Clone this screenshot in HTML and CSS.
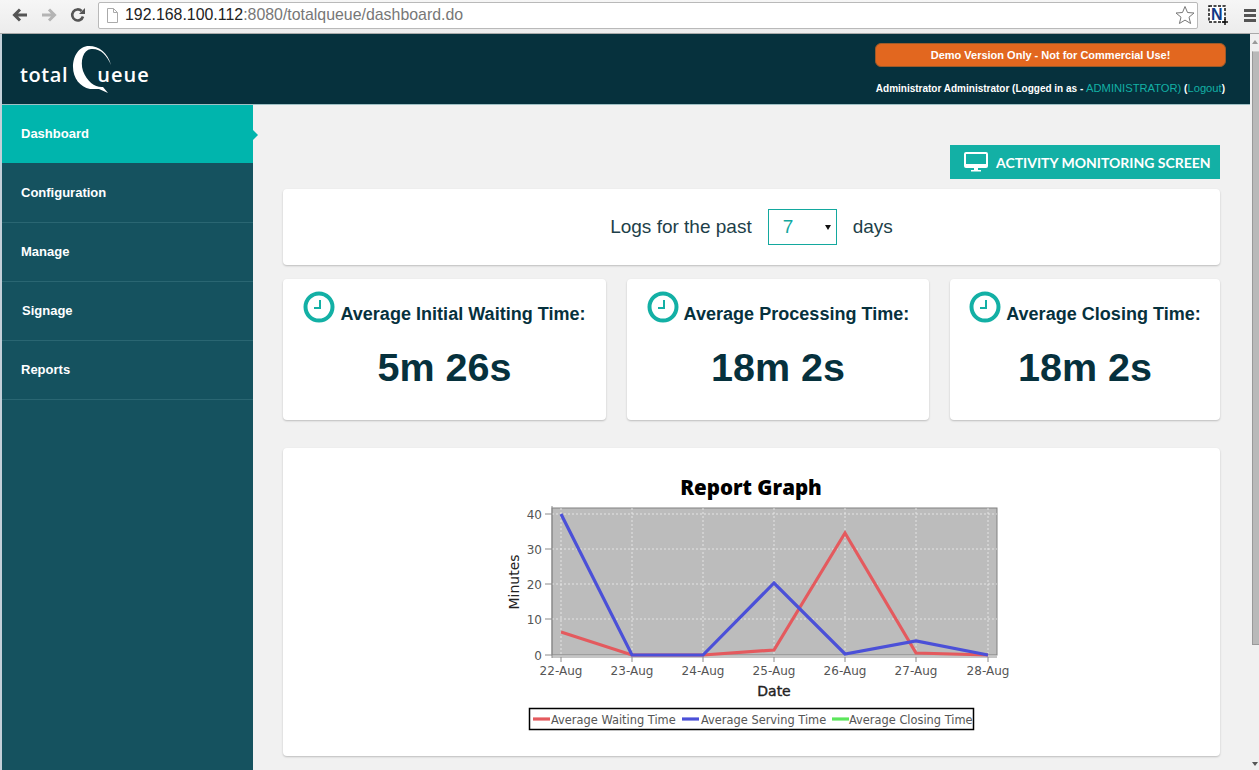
FILE: index.html
```html
<!DOCTYPE html>
<html lang="en">
<head>
    <meta charset="UTF-8">
    <title>totalQueue - Dashboard</title>
    <link rel="stylesheet" href="styles.css">
</head>
<body>
    <!-- browser toolbar -->
    <div class="browser-bar">
        <svg class="nav-icon" width="18" height="18" viewBox="0 0 18 18"><path d="M16 9H4M9 3.5 3.5 9 9 14.5" fill="none" stroke="#555" stroke-width="3"/></svg>
        <svg class="nav-icon" width="18" height="18" viewBox="0 0 18 18"><path d="M2 9h12M9 3.5 14.5 9 9 14.5" fill="none" stroke="#b4b4b4" stroke-width="3"/></svg>
        <svg class="nav-icon" width="18" height="18" viewBox="0 0 18 18"><path d="M14 10.5A5.5 5.5 0 1 1 12.6 5" fill="none" stroke="#555" stroke-width="2.6"/><path d="M10 8h6V2z" fill="#555"/></svg>
        <div class="address-bar">
            <svg width="12" height="15" viewBox="0 0 12 15"><path d="M1.500.5h6l4 4v10h-10zM7.500.5v4h4" fill="#fff" stroke="#aaa"/></svg>
            <span class="url"><span class="url-host">192.168.100.112</span>:8080/totalqueue/dashboard.do</span>
            <svg class="star" width="20" height="20" viewBox="0 0 20 20"><path d="M10 1.500 12.500 7.500 19 8 14 12.200 15.600 18.500 10 15.100 4.400 18.500 6 12.200 1 8 7.500 7.500z" fill="#fff" stroke="#777"/></svg>
        </div>
        <svg class="ext-icon" width="22" height="20" viewBox="0 0 22 20">
            <rect x="1" y="1" width="16" height="16" fill="#fff" stroke="#111" stroke-width="1.500" stroke-dasharray="3 1.500"/>
            <text x="3" y="15" class="ext-letter">N</text>
            <path d="M14 17h6M17 14v6" stroke="#111" stroke-width="1.500"/>
        </svg>
        <svg class="menu-icon" width="12" height="13" viewBox="0 0 12 13"><path d="M0 0h12v3H0zM0 5h12v3H0zM0 10h12v3H0z" fill="#555"/></svg>
    </div>

    <div class="page">
        <div class="app">
            <header class="topbar">
                <div class="logo">
                    <span class="logo-text">total</span>
                    <svg class="logo-q" width="42" height="50" viewBox="0 0 42 50">
                        <path d="M39 20C36 8 27 1 17 1 7 1 1 11 1 22 1 33 8 42 18 44L27 44 36 48 31 42C24 43 15 37 11 26 8 16 11 5 19 4 28 3 35 10 39 20Z" fill="#fff"/>
                    </svg>
                    <span class="logo-text logo-end">ueue</span>
                </div>
                <div class="topbar-right">
                    <div class="demo-banner">Demo Version Only - Not for Commercial Use!</div>
                    <div class="user-line">Administrator Administrator (Logged in as - <a href="#">ADMINISTRATOR)</a> (<a href="#">Logout</a>)</div>
                </div>
            </header>

            <div class="layout">
                <nav class="sidebar">
                    <a class="nav-item active" href="#">Dashboard</a>
                    <a class="nav-item" href="#">Configuration</a>
                    <a class="nav-item" href="#">Manage</a>
                    <a class="nav-item nudge" href="#">Signage</a>
                    <a class="nav-item" href="#">Reports</a>
                </nav>

                <main class="content">
                    <div class="actions">
                        <a class="monitor-btn" href="#">
                            <svg width="24" height="20" viewBox="0 0 24 20"><path d="M2 0h20a2 2 0 0 1 2 2v12a2 2 0 0 1-2 2H2a2 2 0 0 1-2-2V2a2 2 0 0 1 2-2zm0 2v10h20V2z" fill="#fff"/><path d="M10 16h4v2h3v1.500H7V18h3z" fill="#fff"/></svg>
                            ACTIVITY MONITORING SCREEN
                        </a>
                    </div>

                    <div class="card filter-card">
                        <span>Logs for the past</span>
                        <div class="select-box"><span>7</span><i class="caret"></i></div>
                        <span>days</span>
                    </div>

                    <div class="stats">
                        <div class="card stat-card">
                            <div class="stat-title">
                                <svg class="clock" width="32" height="32" viewBox="0 0 32 32"><circle cx="16" cy="16" r="13.500" fill="none" stroke="#13b0a5" stroke-width="4"/><path d="M17 9v8h-6" fill="none" stroke="#13b0a5" stroke-width="2"/></svg>
                                <span>Average Initial Waiting Time:</span>
                            </div>
                            <div class="stat-value">5m 26s</div>
                        </div>
                        <div class="card stat-card">
                            <div class="stat-title">
                                <svg class="clock" width="32" height="32" viewBox="0 0 32 32"><circle cx="16" cy="16" r="13.500" fill="none" stroke="#13b0a5" stroke-width="4"/><path d="M17 9v8h-6" fill="none" stroke="#13b0a5" stroke-width="2"/></svg>
                                <span>Average Processing Time:</span>
                            </div>
                            <div class="stat-value">18m 2s</div>
                        </div>
                        <div class="card stat-card">
                            <div class="stat-title">
                                <svg class="clock" width="32" height="32" viewBox="0 0 32 32"><circle cx="16" cy="16" r="13.500" fill="none" stroke="#13b0a5" stroke-width="4"/><path d="M17 9v8h-6" fill="none" stroke="#13b0a5" stroke-width="2"/></svg>
                                <span>Average Closing Time:</span>
                            </div>
                            <div class="stat-value">18m 2s</div>
                        </div>
                    </div>

                    <div class="card graph-card">
                        <!-- viewBox origin is the card's top left corner -->
                        <svg class="graph" width="937" height="308" viewBox="0 0 937 308">
                            <text class="g-title" x="468" y="47" text-anchor="middle">Report Graph</text>

                            <rect x="269" y="60" width="445" height="147" fill="#bcbcbc" stroke="#808080"/>
                            <g class="g-grid">
                                <path d="M278 60v147M349 60v147M420 60v147M491 60v147M562 60v147M633 60v147M705 60v147"/>
                                <path d="M269 66h445M269 101h445M269 136h445M269 171h445"/>
                            </g>
                            <path class="g-axis" d="M269 58v152M262 66h7M262 101h7M262 136h7M262 171h7M262 207h7M269 209h445M278 209v5M349 209v5M420 209v5M491 209v5M562 209v5M633 209v5M705 209v5"/>

                            <polyline class="g-line red" points="278,184 349,207 420,207 491,202 562,85 633,205 705,207"/>
                            <polyline class="g-line blue" points="278,66 349,207 420,207 491,135 562,206 633,193 705,207"/>

                            <g class="g-tick" text-anchor="end">
                                <text x="259" y="71">40</text>
                                <text x="259" y="106">30</text>
                                <text x="259" y="141">20</text>
                                <text x="259" y="176">10</text>
                                <text x="259" y="212">0</text>
                            </g>
                            <g class="g-tick" text-anchor="middle">
                                <text x="278" y="227">22-Aug</text>
                                <text x="349" y="227">23-Aug</text>
                                <text x="420" y="227">24-Aug</text>
                                <text x="491" y="227">25-Aug</text>
                                <text x="562" y="227">26-Aug</text>
                                <text x="633" y="227">27-Aug</text>
                                <text x="705" y="227">28-Aug</text>
                            </g>
                            <text class="g-label g-date" x="491" y="248" text-anchor="middle">Date</text>
                            <text class="g-label" transform="translate(236 134) rotate(-90)" text-anchor="middle">Minutes</text>

                            <rect x="246.500" y="260.500" width="444" height="21" fill="#fff" stroke="#000" stroke-width="1.500"/>
                            <path class="g-line red" d="M250 271h17"/>
                            <text class="g-legend" x="268" y="276">Average Waiting Time</text>
                            <path class="g-line blue" d="M399 271h17"/>
                            <text class="g-legend" x="418" y="276">Average Serving Time</text>
                            <path class="g-line green" d="M549 271h17"/>
                            <text class="g-legend" x="566" y="276">Average Closing Time</text>
                        </svg>
                    </div>
                </main>
            </div>
        </div>

        <div class="scrollbar">
            <i class="arrow-up"></i>
            <div class="thumb"></div>
            <i class="arrow-down"></i>
        </div>
    </div>
</body>
</html>
```

FILE: styles.css
```css
html, body {
    height: 100%;
}
body {
    margin: 0;
    font-family: "Liberation Sans", Arial, sans-serif;
    background-color: #f1f1f1;
    overflow: hidden;
    display: flex;
    flex-direction: column;
}
a {
    text-decoration: none;
}

/* browser toolbar */
.browser-bar {
    height: 34px;
    flex: none;
    box-sizing: border-box;
    display: flex;
    align-items: center;
    padding: 0 3px 3px 11px;
    gap: 11px;
    background: linear-gradient(#f6f6f6, #ececec);
    border-bottom: 1px solid #a9a9a9;
}
.address-bar {
    width: 1100px;
    height: 27px;
    box-sizing: border-box;
    display: flex;
    align-items: center;
    gap: 7px;
    padding: 0 2px 0 7px;
    background-color: #fff;
    border: 1px solid #b9b9b9;
    border-radius: 2px;
}
.url {
    flex: 1;
    font-size: 15.9px;
    color: #777;
}
.url-host {
    color: #222;
}
.ext-icon {
    margin-left: -1px;
}
.ext-letter {
    font-family: "Liberation Sans", sans-serif;
    font-size: 16px;
    font-weight: bold;
    fill: #123a86;
}
.menu-icon {
    flex: none;
    margin-left: 3px;
}

.page {
    flex: 1;
    min-height: 0;
    display: flex;
}
.app {
    flex: 1;
    min-width: 0;
    display: flex;
    flex-direction: column;
    border-left: 2px solid #c3d0d9;
}

/* header */
.topbar {
    height: 71px;
    flex: none;
    box-sizing: border-box;
    display: flex;
    justify-content: space-between;
    background-color: #06313d;
    border-bottom: 1px solid #9fc0c4;
}
.logo {
    display: flex;
    align-items: flex-start;
    padding: 11px 0 0 18px;
}
.logo-text {
    margin-top: 16px;
    font-family: "Open Sans", sans-serif;
    font-size: 20px;
    font-weight: 600;
    line-height: 28px;
    letter-spacing: 0.6px;
    color: #fff;
}
.logo-q {
    margin-left: 4px;
}
.logo-end {
    margin-left: -17px;
    letter-spacing: 1px;
}
.topbar-right {
    width: 351px;
    margin-right: 24px;
    padding-top: 9px;
}
.demo-banner {
    height: 24px;
    line-height: 22px;
    text-align: center;
    font-size: 11px;
    font-weight: bold;
    color: #fff;
    background-color: #e2671f;
    border: 1px solid #9c5a2a;
    border-radius: 6px;
    box-sizing: border-box;
}
.user-line {
    margin-top: 15px;
    margin-right: 1px;
    font-size: 10px;
    line-height: 12px;
    font-weight: bold;
    text-align: right;
    color: #fff;
    white-space: nowrap;
}
.user-line a {
    font-size: 11.200px;
    font-weight: normal;
    color: #13b0a5;
}

.layout {
    flex: 1;
    min-height: 0;
    display: flex;
}

/* sidebar */
.sidebar {
    width: 251px;
    flex: none;
    background-color: #15525f;
}
.nav-item {
    display: block;
    height: 59px;
    box-sizing: border-box;
    padding-left: 19px;
    line-height: 58px;
    font-size: 13px;
    font-weight: bold;
    color: #fff;
    border-bottom: 1px solid #2a6672;
}
.nav-item.active {
    position: relative;
    height: 58px;
    margin-bottom: 1px;
    background-color: #00b5ad;
    border-bottom: none;
}
.nav-item.active::after {
    content: "";
    position: absolute;
    left: 100%;
    top: 25px;
    border-left: 5px solid #00b5ad;
    border-top: 5px solid transparent;
    border-bottom: 5px solid transparent;
}
.nav-item.nudge {
    padding-left: 20px;
}

/* main area */
.content {
    flex: 1;
    min-width: 0;
    padding: 40px 0 0 30px;
    margin-right: 30px;
}
.actions {
    display: flex;
    justify-content: flex-end;
    margin-bottom: 10px;
}
.monitor-btn {
    width: 270px;
    height: 34px;
    box-sizing: border-box;
    display: flex;
    align-items: center;
    gap: 8px;
    padding-left: 14px;
    font-family: Lato, sans-serif;
    font-size: 14px;
    font-weight: bold;
    color: #fff;
    background-color: #13b0a5;
}
.card {
    background-color: #fff;
    border-radius: 4px;
    box-shadow: 0 1px 2px rgba(0, 0, 0, 0.22);
}
.filter-card {
    height: 76px;
    display: flex;
    align-items: center;
    justify-content: center;
    gap: 16px;
    font-size: 19px;
    color: #1d3f49;
}
.select-box {
    width: 69px;
    height: 36px;
    box-sizing: border-box;
    display: flex;
    align-items: center;
    justify-content: space-between;
    padding: 0 5px 0 14px;
    color: #13a89e;
    border: 1px solid #13a89e;
}
.caret {
    border-top: 5px solid #111;
    border-left: 3px solid transparent;
    border-right: 3px solid transparent;
}
.stats {
    display: grid;
    grid-template-columns: 323px 302px 270px;
    gap: 21px;
    margin-top: 14px;
}
.stat-card {
    height: 141px;
    box-sizing: border-box;
    padding-top: 12px;
}
.stat-title {
    display: flex;
    align-items: flex-end;
    justify-content: center;
    gap: 5px;
    font-size: 18px;
    font-weight: bold;
    letter-spacing: 0.03px;
    color: #06313d;
}
.stat-title span {
    line-height: 24px;
    margin-bottom: -3px;
}
.stat-value {
    margin-top: 21px;
    text-align: center;
    font-size: 39.500px;
    line-height: 46px;
    font-weight: bold;
    color: #06313d;
}
.graph-card {
    height: 308px;
    margin-top: 28px;
}
.graph {
    display: block;
}

/* chart text and lines */
.g-title {
    font-family: "Open Sans", sans-serif;
    font-size: 20.500px;
    font-weight: 800;
    fill: #000;
}
.g-tick {
    font-family: "DejaVu Sans", sans-serif;
    font-size: 12px;
    fill: #555;
}
.g-legend {
    font-family: "DejaVu Sans", sans-serif;
    font-size: 11.400px;
    fill: #555;
}
.g-label {
    font-family: "DejaVu Sans", sans-serif;
    font-size: 14px;
    fill: #222;
}
.g-date {
    stroke: #222;
    stroke-width: 0.4;
}
.g-grid path {
    fill: none;
    stroke: #eeeeee;
    stroke-opacity: 0.8;
    stroke-dasharray: 2 2;
}
.g-axis {
    fill: none;
    stroke: #8c8c8c;
}
.g-line {
    fill: none;
    stroke-width: 3.200;
}
.g-line.red {
    stroke: #e45a5e;
}
.g-line.blue {
    stroke: #4b50d8;
}
.g-line.green {
    stroke: #5ce65c;
}

/* page scrollbar */
.scrollbar {
    width: 9px;
    flex: none;
    position: relative;
    background-color: #f0f0f0;
}
.thumb {
    position: absolute;
    left: 2px;
    right: 0;
    top: 17px;
    height: 592px;
    background-color: #b9b9b9;
    border-left: 1px solid #999;
    border-bottom: 1px solid #999;
    border-top: 1px solid #d0d0d0;
}
.arrow-up, .arrow-down {
    position: absolute;
    right: 1px;
    border-left: 3px solid transparent;
    border-right: 3px solid transparent;
}
.arrow-up {
    top: 6px;
    border-bottom: 4px solid #999;
}
.arrow-down {
    bottom: 4px;
    border-top: 4px solid #555;
}
```
